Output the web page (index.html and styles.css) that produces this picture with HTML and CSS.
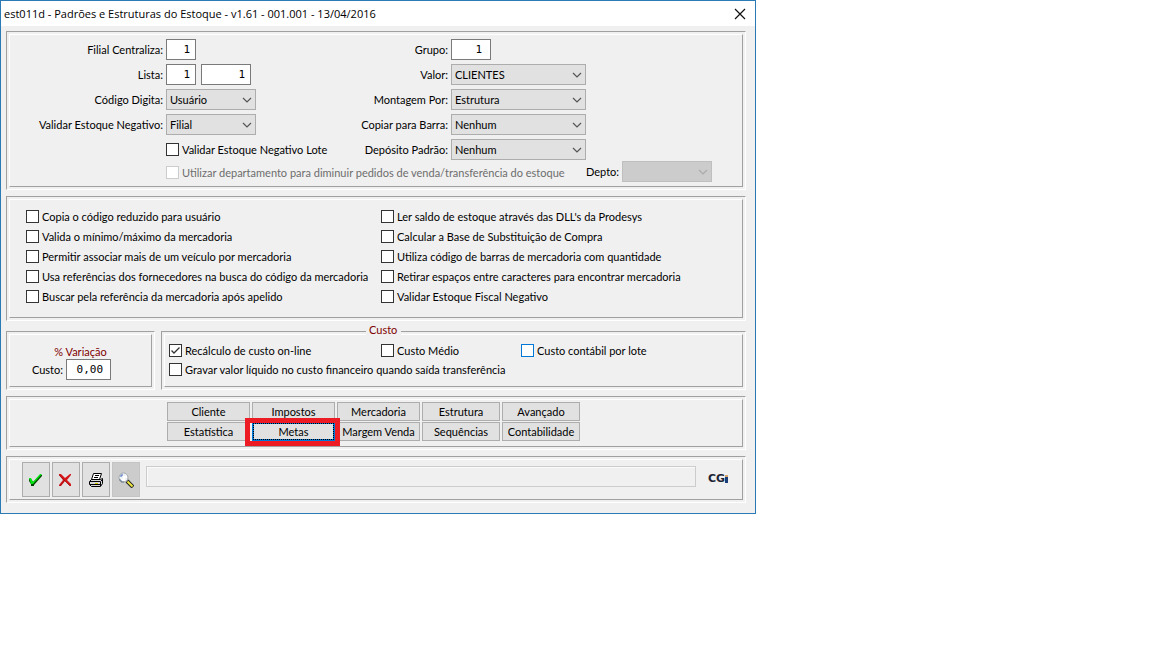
FILE: index.html
```html
<!DOCTYPE html>
<html lang="pt-BR">
<head>
<meta charset="utf-8">
<meta name="viewport" content="width=device-width, initial-scale=1">
<title>Padrões e Estruturas do Estoque</title>
<link rel="stylesheet" href="styles.css">
</head>
<body>
<main class="window">
  <header class="titlebar">
    <h1 class="title">est011d - Padrões e Estruturas do Estoque - v1.61 - 001.001 - 13/04/2016</h1>
    <button class="close" type="button" aria-label="Fechar"><svg width="12" height="12" viewBox="0 0 12 12"><path d="M1 1L11 11M11 1L1 11" stroke="#111" stroke-width="1.2" fill="none"/></svg></button>
  </header>

  <form class="content">
    <section class="panel">
      <div class="inner main-panel">
        <div class="fields">
          <label for="filial">Filial Centraliza:</label>
          <div class="cell"><input class="num small" id="filial" type="text" value="1"></div>
          <label for="grupo">Grupo:</label>
          <div class="cell"><input class="num medium" id="grupo" type="text" value="1"></div>

          <label for="lista">Lista:</label>
          <div class="cell"><input class="num small" id="lista" type="text" value="1"><input class="num large" type="text" value="1" aria-label="Lista, item"></div>
          <label for="valor">Valor:</label>
          <div class="cell"><select class="wide" id="valor"><option>CLIENTES</option></select></div>

          <label for="codigo">Código Digita:</label>
          <div class="cell"><select id="codigo"><option>Usuário</option></select></div>
          <label for="montagem">Montagem Por:</label>
          <div class="cell"><select class="wide" id="montagem"><option>Estrutura</option></select></div>

          <label for="negativo">Validar Estoque Negativo:</label>
          <div class="cell"><select id="negativo"><option>Filial</option></select></div>
          <label for="barra">Copiar para Barra:</label>
          <div class="cell"><select class="wide" id="barra"><option>Nenhum</option></select></div>

          <label class="check lote"><input type="checkbox">Validar Estoque Negativo Lote</label>
          <label for="deposito">Depósito Padrão:</label>
          <div class="cell"><select class="wide" id="deposito"><option>Nenhum</option></select></div>
        </div>
        <div class="department">
          <label class="check disabled"><input type="checkbox" disabled>Utilizar departamento para diminuir pedidos de venda/transferência do estoque</label>
          <label for="depto">Depto:</label>
          <select id="depto" disabled><option></option></select>
        </div>
      </div>
    </section>

    <section class="panel">
      <div class="inner options">
        <label class="check"><input type="checkbox">Copia o código reduzido para usuário</label>
        <label class="check"><input type="checkbox">Ler saldo de estoque através das DLL's da Prodesys</label>
        <label class="check"><input type="checkbox">Valida o mínimo/máximo da mercadoria</label>
        <label class="check"><input type="checkbox">Calcular a Base de Substituição de Compra</label>
        <label class="check"><input type="checkbox">Permitir associar mais de um veículo por mercadoria</label>
        <label class="check"><input type="checkbox">Utiliza código de barras de mercadoria com quantidade</label>
        <label class="check"><input type="checkbox">Usa referências dos fornecedores na busca do código da mercadoria</label>
        <label class="check"><input type="checkbox">Retirar espaços entre caracteres para encontrar mercadoria</label>
        <label class="check"><input type="checkbox">Buscar pela referência da mercadoria após apelido</label>
        <label class="check"><input type="checkbox">Validar Estoque Fiscal Negativo</label>
      </div>
    </section>

    <div class="costs">
      <section class="panel">
        <div class="inner variation">
          <h2 class="heading">% Variação</h2>
          <div class="variation-row">
            <label for="custo">Custo:</label>
            <input class="num percent" id="custo" type="text" value="0,00">
          </div>
        </div>
      </section>
      <section class="panel cost-panel">
        <h2 class="heading legend">Custo</h2>
        <div class="inner cost-options">
          <label class="check"><input type="checkbox" checked>Recálculo de custo on-line</label>
          <label class="check"><input type="checkbox">Custo Médio</label>
          <label class="check"><input class="hot" type="checkbox">Custo contábil por lote</label>
          <label class="check full"><input type="checkbox">Gravar valor líquido no custo financeiro quando saída transferência</label>
        </div>
      </section>
    </div>

    <section class="panel">
      <div class="inner tabs">
        <button class="btn" type="button">Cliente</button>
        <button class="btn" type="button">Impostos</button>
        <button class="btn" type="button">Mercadoria</button>
        <button class="btn" type="button">Estrutura</button>
        <button class="btn" type="button">Avançado</button>
        <button class="btn" type="button">Estatística</button>
        <div class="marked"><button class="btn focused" type="button">Metas</button></div>
        <button class="btn" type="button">Margem Venda</button>
        <button class="btn" type="button">Sequências</button>
        <button class="btn" type="button">Contabilidade</button>
      </div>
    </section>

    <section class="panel">
      <div class="inner toolbar">
        <div class="tools">
          <button class="tool" type="button" aria-label="Confirmar">
            <svg width="16" height="16" viewBox="0 0 16 16"><path d="M1 7H3L5 10L12 3H14V4L6 13V14H3V12L1 9Z" fill="#004800"/><path d="M1 6H3L5 10L12 2H14L5 12H3Z" fill="#00e810"/></svg>
          </button>
          <button class="tool" type="button" aria-label="Cancelar">
            <svg width="16" height="16" viewBox="0 0 16 16"><path d="M1 2H3L7 6L12 2H13V3L9 8L13 12V14H12L7 9L3 14H1V13L5 8L1 3Z" fill="#d51518"/><path d="M1 3L7 9L12 14M7 8L2 14" fill="none" stroke="#980c10" stroke-width=".7"/></svg>
          </button>
          <button class="tool" type="button" aria-label="Imprimir">
            <svg width="16" height="16" viewBox="0 0 16 16"><path d="M5.500 1.500H13.500L11.500 7.500H3.500Z" fill="#fff" stroke="#000"/><path d="M7 3.500H11M6 5.500H10" stroke="#000"/><path d="M1.500 9.500L3.500 7.500H12.500L14.500 6.500V11.500L12.500 14.500H3.500L1.500 12.500Z" fill="#d8d8d8" stroke="#000"/><path d="M2 9.500H12.500L14 8M12.500 10V14M2 12.500H12" fill="none" stroke="#000"/><path d="M7 11.500H10" stroke="#d8c800"/></svg>
          </button>
          <button class="tool pressed" type="button" aria-label="Pesquisar">
            <svg width="16" height="16" viewBox="0 0 16 16"><path d="M9 9L15 15" stroke="#222" stroke-width="4"/><path d="M9.500 9.500L14.500 14.500" stroke="#eee840" stroke-width="2"/><circle cx="5.500" cy="5.500" r="4.500" fill="#eef2f4" stroke="#a2a7ac"/><path d="M2 4H4V2" fill="none" stroke="#4268bd"/><path d="M3 8H6V5H9" fill="none" stroke="#fff" stroke-width="2"/><path d="M1 8H3V10H6" fill="none" stroke="#647890"/></svg>
          </button>
        </div>
        <output class="status"></output>
        <span class="logo">CG<span class="logo-mark"></span></span>
      </div>
    </section>
  </form>
</main>
</body>
</html>
```
FILE: styles.css
```css
* { box-sizing: border-box; }

body {
  margin: 0;
  background: #fff;
  color: #000;
  font: 11px/13px Lato, "Liberation Sans", Arial, sans-serif;
}

button, select { font: inherit; color: inherit; }

.window {
  width: 100%;
  max-width: 756px;
  background: #f0f0f0;
  border: 1px solid #2a7ab5;
}

.titlebar {
  display: flex;
  align-items: center;
  justify-content: space-between;
  height: 25px;
  padding: 0 9px 0 3px;
  background: #fff;
}

.title {
  margin: 0;
  font: 11px/16px "Open Sans", "Noto Sans", sans-serif;
}

.close {
  display: flex;
  padding: 0;
  border: 0;
  background: none;
}

.content {
  display: flex;
  flex-direction: column;
  gap: 6px;
  padding: 5px 9px 10px 5px;
}

/* Double bevel: sunken outer line with a raised inner line */
.panel {
  padding: 2px;
  border: 1px solid;
  border-color: #a0a0a0 #fff #fff #a0a0a0;
}

.inner {
  height: 100%;
  border: 1px solid;
  border-color: #fff #a0a0a0 #a0a0a0 #fff;
}

.main-panel { padding: 4px 0; }

.fields {
  display: grid;
  grid-template-columns: 153px 170px 109px 1fr;
  grid-auto-rows: 21px;
  gap: 4px 3px;
  align-items: center;
}

.fields > label { text-align: right; }
.cell { display: flex; gap: 5px; }

.check {
  display: flex;
  align-items: center;
  gap: 3px;
  white-space: nowrap;
}

.fields > .lote { grid-column: 2; text-align: left; }

.check input {
  appearance: none;
  flex: none;
  width: 13px;
  height: 13px;
  margin: 0;
  border: 1px solid #333;
  background: #fff;
}

.check input:checked {
  background: #fff url("data:image/svg+xml,%3Csvg xmlns='http://www.w3.org/2000/svg' viewBox='0 0 11 11'%3E%3Cpath d='M1.500 5.500L4 8L9.500 2.500' fill='none' stroke='%23333' stroke-width='1.300'/%3E%3C/svg%3E");
}

.check input:disabled { border-color: #ccc; }
.check input.hot { border-color: #0078d7; }
.disabled { color: #6d6d6d; }

.num {
  height: 21px;
  padding: 0 5px 0 0;
  border: 1px solid #7a7a7a;
  background: #fff;
  color: #000;
  font: 11px "DejaVu Sans Mono", monospace;
  text-align: right;
}

.small { width: 30px; }
.medium { width: 40px; padding-right: 8px; }
.large { width: 50px; }
.percent { width: 45px; padding-right: 7px; }

select {
  appearance: none;
  width: 90px;
  height: 21px;
  padding: 0 20px 0 3px;
  border: 1px solid #adadad;
  border-radius: 0;
  background: #e1e1e1 url("data:image/svg+xml,%3Csvg xmlns='http://www.w3.org/2000/svg' width='10' height='6'%3E%3Cpath d='M1 1L5 5L9 1' fill='none' stroke='%23555' stroke-width='1.200'/%3E%3C/svg%3E") no-repeat right 3px center;
}

.wide { width: 135px; }

select:disabled {
  border-color: #bfbfbf;
  background-color: #ccc;
  background-image: url("data:image/svg+xml,%3Csvg xmlns='http://www.w3.org/2000/svg' width='10' height='6'%3E%3Cpath d='M1 1L5 5L9 1' fill='none' stroke='%23aaa' stroke-width='1.200'/%3E%3C/svg%3E");
  opacity: 1;
}

.department {
  display: flex;
  align-items: center;
  gap: 3px;
  margin-top: 1px;
  padding-left: 156px;
}

.department .check { flex: 0 1 417px; padding-top: 2px; }

.options {
  display: grid;
  grid-template-columns: 355px 1fr;
  grid-auto-rows: 20px;
  align-items: center;
  padding: 6px 0 11px 16px;
}

.costs {
  display: flex;
  gap: 6px;
  padding: 4px 0 0;
}

.costs > .panel:first-child { flex: 0 0 149px; }

.heading {
  margin: 0;
  color: #800000;
  font-size: 11px;
  font-weight: 400;
}

.variation {
  display: flex;
  flex-direction: column;
  align-items: center;
  padding: 10px 0 6px;
}

.variation-row {
  display: flex;
  align-items: center;
  gap: 3px;
  margin-top: 1px;
  padding-right: 18px;
}

.cost-panel { position: relative; flex: 1; }

.legend {
  position: absolute;
  top: -9px;
  left: 204px;
  padding: 0 4px 0 3px;
  background: #f0f0f0;
}

.cost-options {
  display: grid;
  grid-template-columns: 212px 140px 1fr;
  grid-auto-rows: 19px;
  align-items: center;
  padding: 6px 0 6px 4px;
}

.full { grid-column: 1 / -1; }

.tabs {
  display: grid;
  grid-template-columns: repeat(3, 83px) repeat(2, 78px);
  grid-auto-rows: 19px;
  gap: 1px 2px;
  padding: 2px 0 5px 157px;
}

.btn {
  display: flex;
  align-items: center;
  justify-content: center;
  width: 100%;
  height: 19px;
  padding: 0;
  border: 1px solid #adadad;
  background: #e1e1e1;
  white-space: nowrap;
}

.focused {
  border: 2px solid #0078d7;
  outline: 1px dotted #000;
  outline-offset: -2px;
}

.marked { position: relative; }

.marked::after {
  content: "";
  position: absolute;
  inset: -4px -5px -5px -7px;
  border: 5px solid #ed1c24;
  pointer-events: none;
}

.toolbar {
  display: flex;
  align-items: flex-start;
  gap: 6px;
  padding: 2px 14px 2px 12px;
}

.tools { display: flex; gap: 2px; }

.tool {
  display: flex;
  align-items: center;
  justify-content: center;
  width: 28px;
  height: 35px;
  padding: 0;
  border: 1px solid #adadad;
  background: #e1e1e1;
}

.pressed { border-color: #c4c4c4; background: #ccc; }

.status {
  flex: 1;
  height: 21px;
  margin-top: 4px;
  border: 1px solid #ccc;
  box-shadow: inset 1px 1px #fafafa;
}

.logo {
  display: flex;
  align-items: center;
  margin: 10px 0 0 6px;
  color: #1c2333;
  font: bold 11px/14px "DejaVu Sans", sans-serif;
}

.logo-mark {
  width: 3px;
  height: 8px;
  border-top: 2px solid #d9a36a;
  background: #1d3d78;
}
```
